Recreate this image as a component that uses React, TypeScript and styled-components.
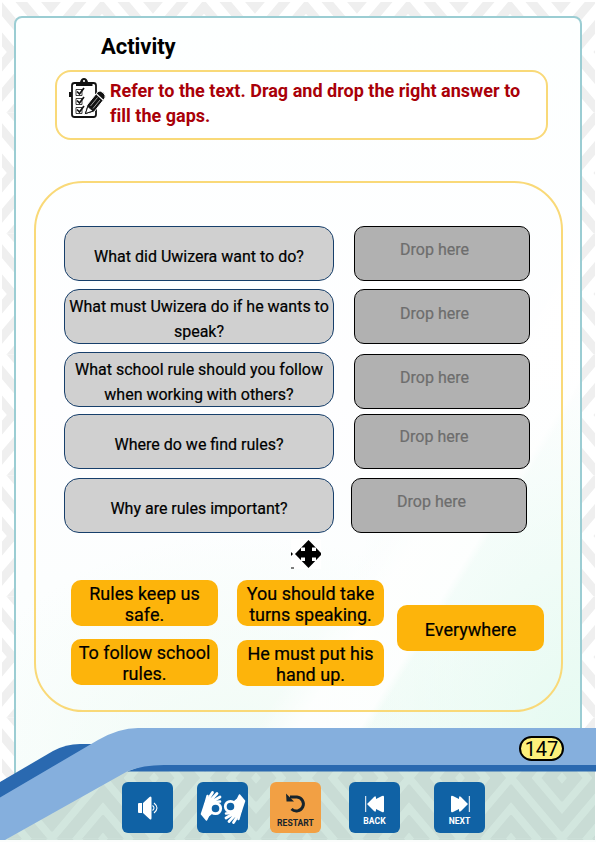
import React from "react";
import styled, { createGlobalStyle } from "styled-components";

const GlobalStyle = createGlobalStyle`
  * { box-sizing: border-box; }
  body { margin: 0; font-family: Roboto, "Liberation Sans", sans-serif; color: #000; }
`;

const Page = styled.main`
  position: relative;
  display: flex;
  flex-direction: column;
  width: 596px;
  height: 842px;
  overflow: hidden;
  background: #fff;
`;

const Backdrop = styled.svg`
  position: absolute;
  inset: 0;
`;

const Frame = styled.section`
  position: relative;
  flex: none;
  display: flex;
  flex-direction: column;
  width: 568px;
  height: 760px;
  margin: 16px 0 0 14px;
  border: 2px solid #9bcdd3;
  border-radius: 8px 8px 0 0;
  background:
    linear-gradient(122deg, transparent 66%, #ffffffd0 70%, #ffffffd0 76%, transparent 77%),
    radial-gradient(ellipse 260px 420px at 100% 100%, #e4faf0, transparent),
    radial-gradient(ellipse 300px 240px at 40% 100%, #f0fbf5, transparent),
    linear-gradient(#fdffff, #fefeff 50%, #fafefd);
`;

const Title = styled.h1`
  margin: 15px 0 0 85px;
  font-size: 22px;
  line-height: 28px;
  font-weight: 700;
  letter-spacing: -0.05px;
`;

const Instruction = styled.div`
  display: flex;
  width: 493px;
  height: 70px;
  margin: 9px 0 0 39px;
  padding: 6px 10px 0 11px;
  border: 2px solid #f9d978;
  border-radius: 16px;
  background: #fff;
`;

const InstructionText = styled.p`
  margin: 0 0 0 4px;
  color: #a90008;
  font-size: 18px;
  font-weight: 700;
  line-height: 25px;
  letter-spacing: 0.015px;
  white-space: nowrap;
`;

const Exercise = styled.div`
  display: flex;
  flex-direction: column;
  width: 529px;
  height: 531px;
  margin: 41px 0 0 18px;
  padding: 43px 0 0 28px;
  border: 2px solid #f9d978;
  border-radius: 49px;
`;

const Row = styled.div<{ $gap: number }>`
  display: flex;
  height: 55px;
  margin-bottom: ${(p) => p.$gap}px;
`;

const Question = styled.div`
  display: flex;
  align-items: center;
  justify-content: center;
  width: 270px;
  height: 55px;
  padding-top: 5px;
  border: 1px solid #173f6b;
  border-radius: 15px;
  background: #d0d0d0;
  font-size: 16px;
  line-height: 25px;
  text-align: center;
  white-space: pre-line;
  -webkit-text-stroke: 0.2px #000;
`;

const DropZone = styled.div<{ $left: number; $down: number; $text: number }>`
  width: 176px;
  height: 55px;
  margin: ${(p) => p.$down}px 0 0 ${(p) => p.$left}px;
  padding: ${(p) => p.$text}px 15px 0 0;
  border: 1px solid #000;
  border-radius: 10px;
  background: #b1b1b1;
  color: #6d6d6d;
  font-size: 16px;
  line-height: 20px;
  text-align: center;
  -webkit-text-stroke: 0.2px #6d6d6d;
`;

const MoveMark = styled.svg`
  flex: none;
  margin: 6px 0 0 227px;
`;

const Answers = styled.div`
  display: flex;
  margin: 11px 0 0 7px;
`;

const AnswerColumn = styled.div<{ $left?: number; $top?: number; $gap?: number }>`
  display: flex;
  flex-direction: column;
  gap: ${(p) => p.$gap ?? 13}px;
  margin: ${(p) => p.$top ?? 0}px 0 0 ${(p) => p.$left ?? 0}px;
`;

const Answer = styled.div<{ $single?: boolean }>`
  display: flex;
  align-items: center;
  justify-content: center;
  width: 147px;
  height: 46px;
  padding-top: ${(p) => (p.$single ? 3 : 1)}px;
  border-radius: 10px;
  background: #fdb40b;
  font-size: 18px;
  line-height: 21px;
  text-align: center;
  white-space: pre-line;
  -webkit-text-stroke: 0.2px #000;
`;

const Footer = styled.footer`
  position: relative;
  display: flex;
  flex-direction: column;
  height: 122px;
  margin-top: -56px;
`;

const Swoosh = styled.svg`
  position: absolute;
  inset: 0;
`;

const PageNumber = styled.div`
  position: relative;
  align-self: flex-end;
  width: 45px;
  height: 25px;
  margin: 16px 32px 0 0;
  border: 2px solid #000;
  border-radius: 13px;
  background: #fdf07b;
  font-size: 20px;
  line-height: 22px;
  text-align: center;
`;

const Controls = styled.nav`
  position: relative;
  display: flex;
  margin: 21px 0 0 122px;
`;

const Control = styled.button<{ $gap: number; $accent?: boolean; $labelled?: boolean }>`
  display: flex;
  flex-direction: column;
  align-items: center;
  justify-content: center;
  width: 51px;
  height: 51px;
  margin: 0 ${(p) => p.$gap}px 0 0;
  padding: ${(p) => (p.$labelled ? 7 : 0)}px 0 0;
  border: 0;
  border-radius: 6px;
  background: ${(p) => (p.$accent ? "#f2a044" : "#1062a5")};
  color: ${(p) => (p.$accent ? "#17242c" : "#fff")};
`;

const ControlLabel = styled.span`
  margin-top: 3px;
  font: 700 8.6px/11px Roboto, sans-serif;
`;

/* One quarter of the diamond motif, mirrored into a full tile. */
function MirroredQuarter() {
  const quarter = "M-4 19.800 16.700 -4.700M-4 50 42.200 -4.700M-4 80 55 10.200M21.200 80.600 55 40.500";
  return (
    <>
      {["", "translate(102 0) scale(-1 1)", "translate(0 121) scale(1 -1)", "translate(102 121) scale(-1 -1)"].map((t) => (
        <g key={t} transform={t}>
          <g clipPath="url(#quarterClip)">
            <path d={quarter} />
          </g>
        </g>
      ))}
    </>
  );
}

function Chevrons() {
  return (
    <Backdrop width="596" height="842">
      <defs>
        <clipPath id="quarterClip">
          <rect width="51" height="60.500" />
        </clipPath>
        <pattern id="lattice" width="102" height="121" patternUnits="userSpaceOnUse" x="0" y="52">
          <g fill="none" stroke="#efefef" strokeWidth="9">
            <MirroredQuarter />
          </g>
        </pattern>
      </defs>
      <rect x="2" y="2" width="593" height="838" fill="url(#lattice)" />
    </Backdrop>
  );
}

function Band() {
  return (
    <Swoosh width="596" height="122" viewBox="0 720 596 122">
      <defs>
        <pattern id="footerLattice" width="102" height="121" patternUnits="userSpaceOnUse" x="52" y="778">
          <g fill="none" stroke="#c9dcd5" strokeWidth="12">
            <MirroredQuarter />
          </g>
        </pattern>
      </defs>
      <path d="M0 842V797L130 768H595V840H0Z" fill="#d2e6de" />
      <path d="M8 838 128 768H595V840H8Z" fill="url(#footerLattice)" />
      <path d="M0 840H596V842H0Z" fill="#fbfdfc" />
      <path d="M0 782 53 751Q66 744 80 744H110L90 765 0 810Z" fill="#2a69b0" />
      <path d="M127 771.500H596V763H150Z" fill="#2a69b0" />
      <path d="M0 797.500 98 740Q119 728 138 728H596V765H170Q145 764 128 771L5 840H0Z" fill="#85afdd" />
    </Swoosh>
  );
}

function Checklist() {
  return (
    <svg width="38" height="41" viewBox="0 0 38 41">
      <rect x="4" y="5" width="24" height="34" rx="2.500" fill="#fff" stroke="#111" strokeWidth="1.800" />
      <path d="M8 8V5q0-1 1.500-1H12q1-4 4-4t4 4h3q1.500 0 1.500 1V8Z" fill="#111" />
      <circle cx="16" cy="3" r="1.100" fill="#fff" />
      <path d="M1 14h3v5H1Z" fill="#111" />
      <g fill="none" stroke="#111">
        <path d="M8 11.500h6v6H8ZM8 20.500h6v6H8ZM8 29.500h6v6H8Z" strokeWidth=".8" />
        <path d="m9 13.500 2.500 2.500L16 10M9 22.500l2.500 2.500L16 19M9 31.500l2.500 2.500L16 28" strokeWidth="1.700" />
      </g>
      <path d="M16 37 19 27 30 13.500Q32 12 35 14.500T37 20L26 34Z" fill="#111" stroke="#fff" strokeWidth="1" />
      <path d="m17.500 35.500 2.300-7 5.200 4.500Z" fill="#fff" stroke="#111" strokeWidth=".9" />
      <path d="m22.500 28 7-8.500M25 30.500l7-8.500" stroke="#fff" strokeWidth=".6" />
      <path d="m28.500 16 6.500 6" stroke="#fff" strokeWidth="1.100" />
    </svg>
  );
}

/* A hand with thumb and forefinger closed in a ring; the second is turned half round. */
function Hand() {
  return (
    <g fill="none" stroke="#fff" strokeLinecap="round" strokeLinejoin="round">
      <circle cx="15.500" cy="18.500" r="5.200" strokeWidth="2.800" />
      <path d="M1.500 24 5 13.500 10 9 15 11.500Q7.500 16 11.500 23.500L8.500 26 6.500 30Z" fill="#fff" strokeWidth="1.600" />
      <path d="M6.500 12 12.500 2.500M9 12 17 3.500M11.500 12 20 7" strokeWidth="2.800" />
      <path d="M5 15 7.500 6" strokeWidth="2.400" />
      <path d="M14 12 20 11.500" strokeWidth="2.600" />
    </g>
  );
}

const rows = [
  { q: "What did Uwizera want to do?", gap: 8, left: 20, down: 0, text: 13 },
  { q: "What must Uwizera do if he wants to\nspeak?", gap: 8, left: 20, down: 0, text: 14 },
  { q: "What school rule should you follow\nwhen working with others?", gap: 7, left: 20, down: 2, text: 13 },
  { q: "Where do we find rules?", gap: 9, left: 19.5, down: 0, text: 12 },
  { q: "Why are rules important?", gap: 0, left: 17, down: 0, text: 13 },
];

export default function App() {
  return (
    <Page>
      <GlobalStyle />
      <Chevrons />
      <Frame>
        <Title>Activity</Title>
        <Instruction>
          <Checklist />
          <InstructionText>
            Refer to the text. Drag and drop the right answer to
            <br />
            fill the gaps.
          </InstructionText>
        </Instruction>
        <Exercise>
          {rows.map((r) => (
            <Row key={r.q} $gap={r.gap}>
              <Question>{r.q}</Question>
              <DropZone $left={r.left} $down={r.down} $text={r.text}>
                Drop here
              </DropZone>
            </Row>
          ))}
          <MoveMark width="30" height="30" viewBox="0 0 30 30">
            <rect width="30" height="30" fill="#fff" />
            <path d="M17.500 1 31 15 17.500 29 4 15Z" />
            <path d="M10 8.500h4v3.500H10ZM21 8.500h4v3.500H21ZM10 18.500h4v3.500H10ZM21 18.500h4v3.500H21Z" fill="#fff" />
            <path d="M0 13 2 15 0 17ZM0 28.500h3v1H0Z" />
          </MoveMark>
          <Answers>
            <AnswerColumn>
              <Answer>{"Rules keep us\nsafe."}</Answer>
              <Answer>{"To follow school\nrules."}</Answer>
            </AnswerColumn>
            <AnswerColumn $left={19} $gap={14}>
              <Answer>{"You should take\nturns speaking."}</Answer>
              <Answer>{"He must put his\nhand up."}</Answer>
            </AnswerColumn>
            <AnswerColumn $left={13} $top={25}>
              <Answer $single>Everywhere</Answer>
            </AnswerColumn>
          </Answers>
        </Exercise>
      </Frame>
      <Footer>
        <Band />
        <PageNumber>147</PageNumber>
        <Controls>
          <Control $gap={24} aria-label="Sound">
            <svg width="20" height="24" viewBox="0 0 20 24">
              <path d="M0 8Q0 7 1 7H4V17H1Q0 17 0 16ZM5 7 11.500 1Q13.500-.5 13.500 2V22Q13.500 24.500 11.500 23L5 17Z" fill="#fff" />
              <path d="M14.500 9.500q3 2.500 0 5M16 7q6 5 0 10" fill="none" stroke="#fff" strokeWidth="1.100" />
            </svg>
          </Control>
          <Control $gap={22} aria-label="Sign language">
            <svg width="46" height="35" viewBox="0 0 46 35">
              <Hand />
              <g transform="rotate(180 23 17.500)">
                <Hand />
              </g>
            </svg>
          </Control>
          <Control $gap={28} $accent $labelled>
            <svg width="22" height="22" viewBox="0 0 22 22">
              <path d="M5 4H12A7 7 0 1 1 6.500 16" fill="none" stroke="#17242c" strokeWidth="3" />
              <path d="M1 .5 1.500 8.500 9 8.500Z" fill="#17242c" />
            </svg>
            <ControlLabel>RESTART</ControlLabel>
          </Control>
          <Control $gap={34} $labelled>
            <svg width="20" height="18" viewBox="0 0 20 18">
              <path d="M.7 1V17" stroke="#fff" strokeWidth="1" />
              <path d="M2 9 9 2Q11 0 11 3V4L17 1Q19 0 19 2V16Q19 18 17 17L11 14V15Q11 18 9 16Z" fill="#fff" />
            </svg>
            <ControlLabel>BACK</ControlLabel>
          </Control>
          <Control $gap={0} $labelled>
            <svg width="20" height="18" viewBox="0 0 20 18">
              <path d="M19.300 1V17" stroke="#fff" strokeWidth="1" />
              <path d="M18 9 11 2Q9 0 9 3V4L3 1Q1 0 1 2V16Q1 18 3 17L9 14V15Q9 18 11 16Z" fill="#fff" />
            </svg>
            <ControlLabel>NEXT</ControlLabel>
          </Control>
        </Controls>
      </Footer>
    </Page>
  );
}
